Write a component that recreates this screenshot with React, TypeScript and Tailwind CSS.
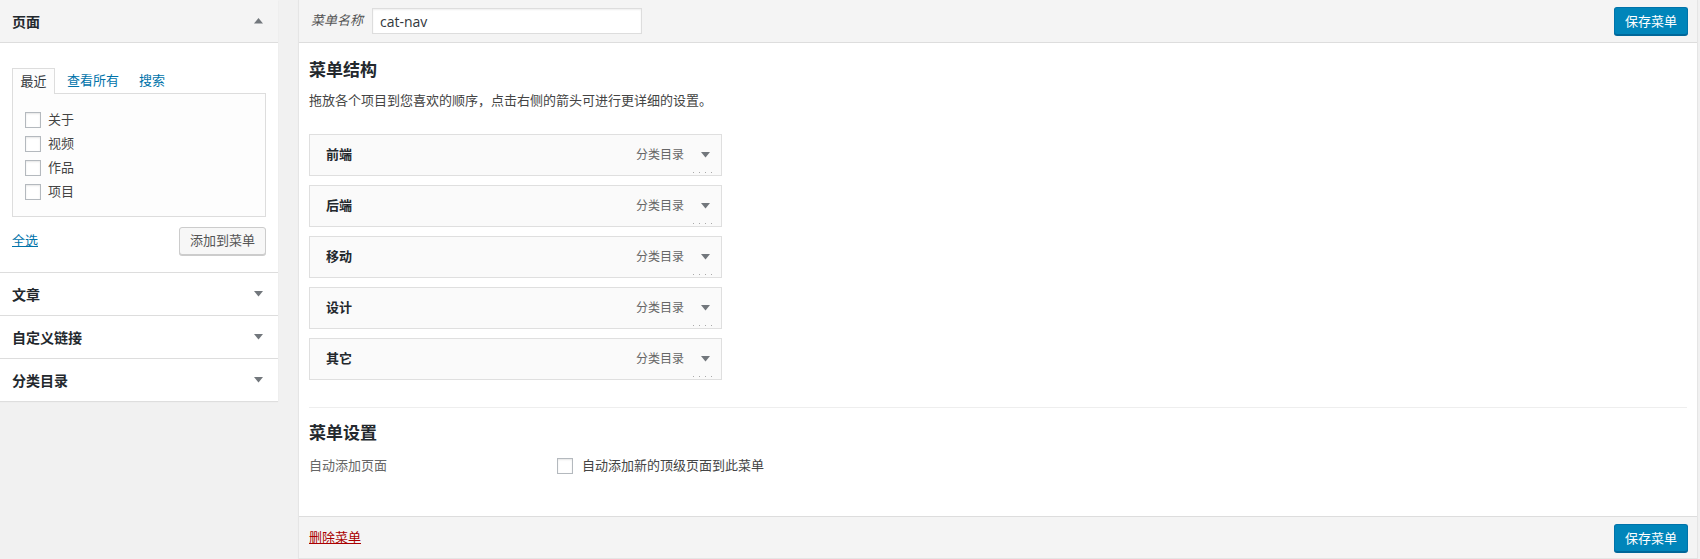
import React from "react";

const FONT = { fontFamily: '"Open Sans", "Noto Sans CJK SC", sans-serif' };

function Down() {
  return (
    <svg width="9" height="6" viewBox="0 0 9 6" className="block">
      <polygon points="0,0 9,0 4.5,5.5" fill="#72777c" />
    </svg>
  );
}
function Up() {
  return (
    <svg width="9" height="6" viewBox="0 0 9 6" className="block">
      <polygon points="0,5.5 9,5.5 4.5,0" fill="#72777c" />
    </svg>
  );
}

function Box() {
  return <span className="inline-block w-[16px] h-[16px] border border-[#b4b9be] bg-white shadow-[inset_0_1px_2px_rgba(0,0,0,0.1)] shrink-0" />;
}

function SaveBtn() {
  return (
    <button className="h-[28px] w-[74px] rounded-[3px] bg-[#0085ba] border border-[#0073aa] border-b-[#006799] shadow-[0_1px_0_#006799] text-white text-[13px] leading-[26px]">
      保存菜单
    </button>
  );
}

const items = ["前端", "后端", "移动", "设计", "其它"];

export default function App() {
  return (
    <div style={FONT} className="w-[1700px] h-[559px] bg-[#f1f1f1] flex items-start overflow-hidden text-[#444]">
      {/* Left column */}
      <div className="w-[278px] bg-white shadow-[0_1px_1px_rgba(0,0,0,0.08)]">
        <div className="h-[43px] bg-[#f4f4f4] border-b border-[#dddddd] flex items-center justify-between pl-[12px] pr-[15px]">
          <span className="text-[14px] font-bold text-[#23282d]">页面</span>
          <Up />
        </div>
        <div className="pt-[25px] pb-[17px] px-[12px]">
          <div className="flex items-end h-[25px] text-[13px]">
            <div className="relative z-10 h-[26px] w-[43px] border border-[#dddddd] border-b-0 bg-[#fdfdfd] flex items-center justify-center text-[#32373c] -mb-px">
              最近
            </div>
            <span className="ml-[12px] h-[25px] leading-[25px] text-[#0073aa]">查看所有</span>
            <span className="ml-[20px] h-[25px] leading-[25px] text-[#0073aa]">搜索</span>
          </div>
          <div className="h-[124px] border border-[#dddddd] bg-[#fdfdfd] pt-[14px] pl-[12px] flex flex-col">
            {["关于", "视频", "作品", "项目"].map((t) => (
              <div key={t} className="h-[24px] flex items-center gap-[7px] text-[13px] text-[#444]">
                <Box />
                <span>{t}</span>
              </div>
            ))}
          </div>
          <div className="mt-[10px] flex items-center justify-between">
            <span className="text-[13px] text-[#0073aa] underline">全选</span>
            <button className="h-[28px] w-[87px] rounded-[3px] bg-[#f7f7f7] border border-[#cccccc] shadow-[0_1px_0_#cccccc] text-[13px] text-[#555]">
              添加到菜单
            </button>
          </div>
        </div>
        {["文章", "自定义链接", "分类目录"].map((t) => (
          <div key={t} className="h-[43px] border-t border-[#dddddd] flex items-center justify-between pl-[12px] pr-[15px]">
            <span className="text-[14px] font-bold text-[#23282d]">{t}</span>
            <Down />
          </div>
        ))}
      </div>

      {/* Main column */}
      <div className="ml-[20px] w-[1400px] h-[559px] bg-white border-x border-b border-[#e5e5e5] shadow-[0_1px_1px_rgba(0,0,0,0.04)] flex flex-col">
        <div className="h-[43px] bg-[#f4f4f4] border-b border-[#dddddd] flex items-center pl-[12px] pr-[9px] shrink-0">
          <span className="text-[13px] italic text-[#555]">菜单名称</span>
          <div className="ml-[9px] h-[26px] w-[270px] border border-[#dddddd] bg-white shadow-[inset_0_1px_2px_rgba(0,0,0,0.07)] flex items-center pl-[7px] text-[14px] text-[#32373c]">
            cat-nav
          </div>
          <div className="ml-auto">
            <SaveBtn />
          </div>
        </div>
        <div className="flex-1 pt-[15px] px-[10px]">
          <h3 className="h-[24px] leading-[24px] text-[17px] font-semibold text-[#23282d]">菜单结构</h3>
          <p className="mt-[8px] h-[20px] leading-[20px] text-[13px] text-[#444]">
            拖放各个项目到您喜欢的顺序，点击右侧的箭头可进行更详细的设置。
          </p>
          <div className="mt-[24px] flex flex-col gap-[9px]">
            {items.map((t) => (
              <div key={t} className="relative w-[413px] h-[42px] border border-[#dfdfdf] bg-[#fafafa] flex items-center pl-[16px] pr-[10px]">
                <span className="text-[13px] font-bold text-[#23282d]">{t}</span>
                <span className="ml-auto text-[12px] text-[#666]">分类目录</span>
                <span className="ml-[17px] mr-[1px]">
                  <Down />
                </span>
                <div className="absolute right-[9px] bottom-[2px] flex gap-[5px]">
                  <span className="w-[1px] h-[1px] bg-[#aaa]" />
                  <span className="w-[1px] h-[1px] bg-[#aaa]" />
                  <span className="w-[1px] h-[1px] bg-[#aaa]" />
                  <span className="w-[1px] h-[1px] bg-[#aaa]" />
                </div>
              </div>
            ))}
          </div>
          <div className="mt-[27px] h-px bg-[#eeeeee]" />
          <h3 className="mt-[13px] h-[24px] leading-[24px] text-[17px] font-semibold text-[#23282d]">菜单设置</h3>
          <div className="mt-[11px] h-[20px] flex items-center text-[13px]">
            <span className="w-[248px] text-[#666]">自动添加页面</span>
            <Box />
            <span className="ml-[9px] text-[#444]">自动添加新的顶级页面到此菜单</span>
          </div>
        </div>
        <div className="h-[42px] bg-[#f4f4f4] border-t border-[#dddddd] flex items-center pl-[10px] pr-[9px] shrink-0">
          <span className="text-[13px] text-[#a00] underline">删除菜单</span>
          <div className="ml-auto">
            <SaveBtn />
          </div>
        </div>
      </div>
    </div>
  );
}
